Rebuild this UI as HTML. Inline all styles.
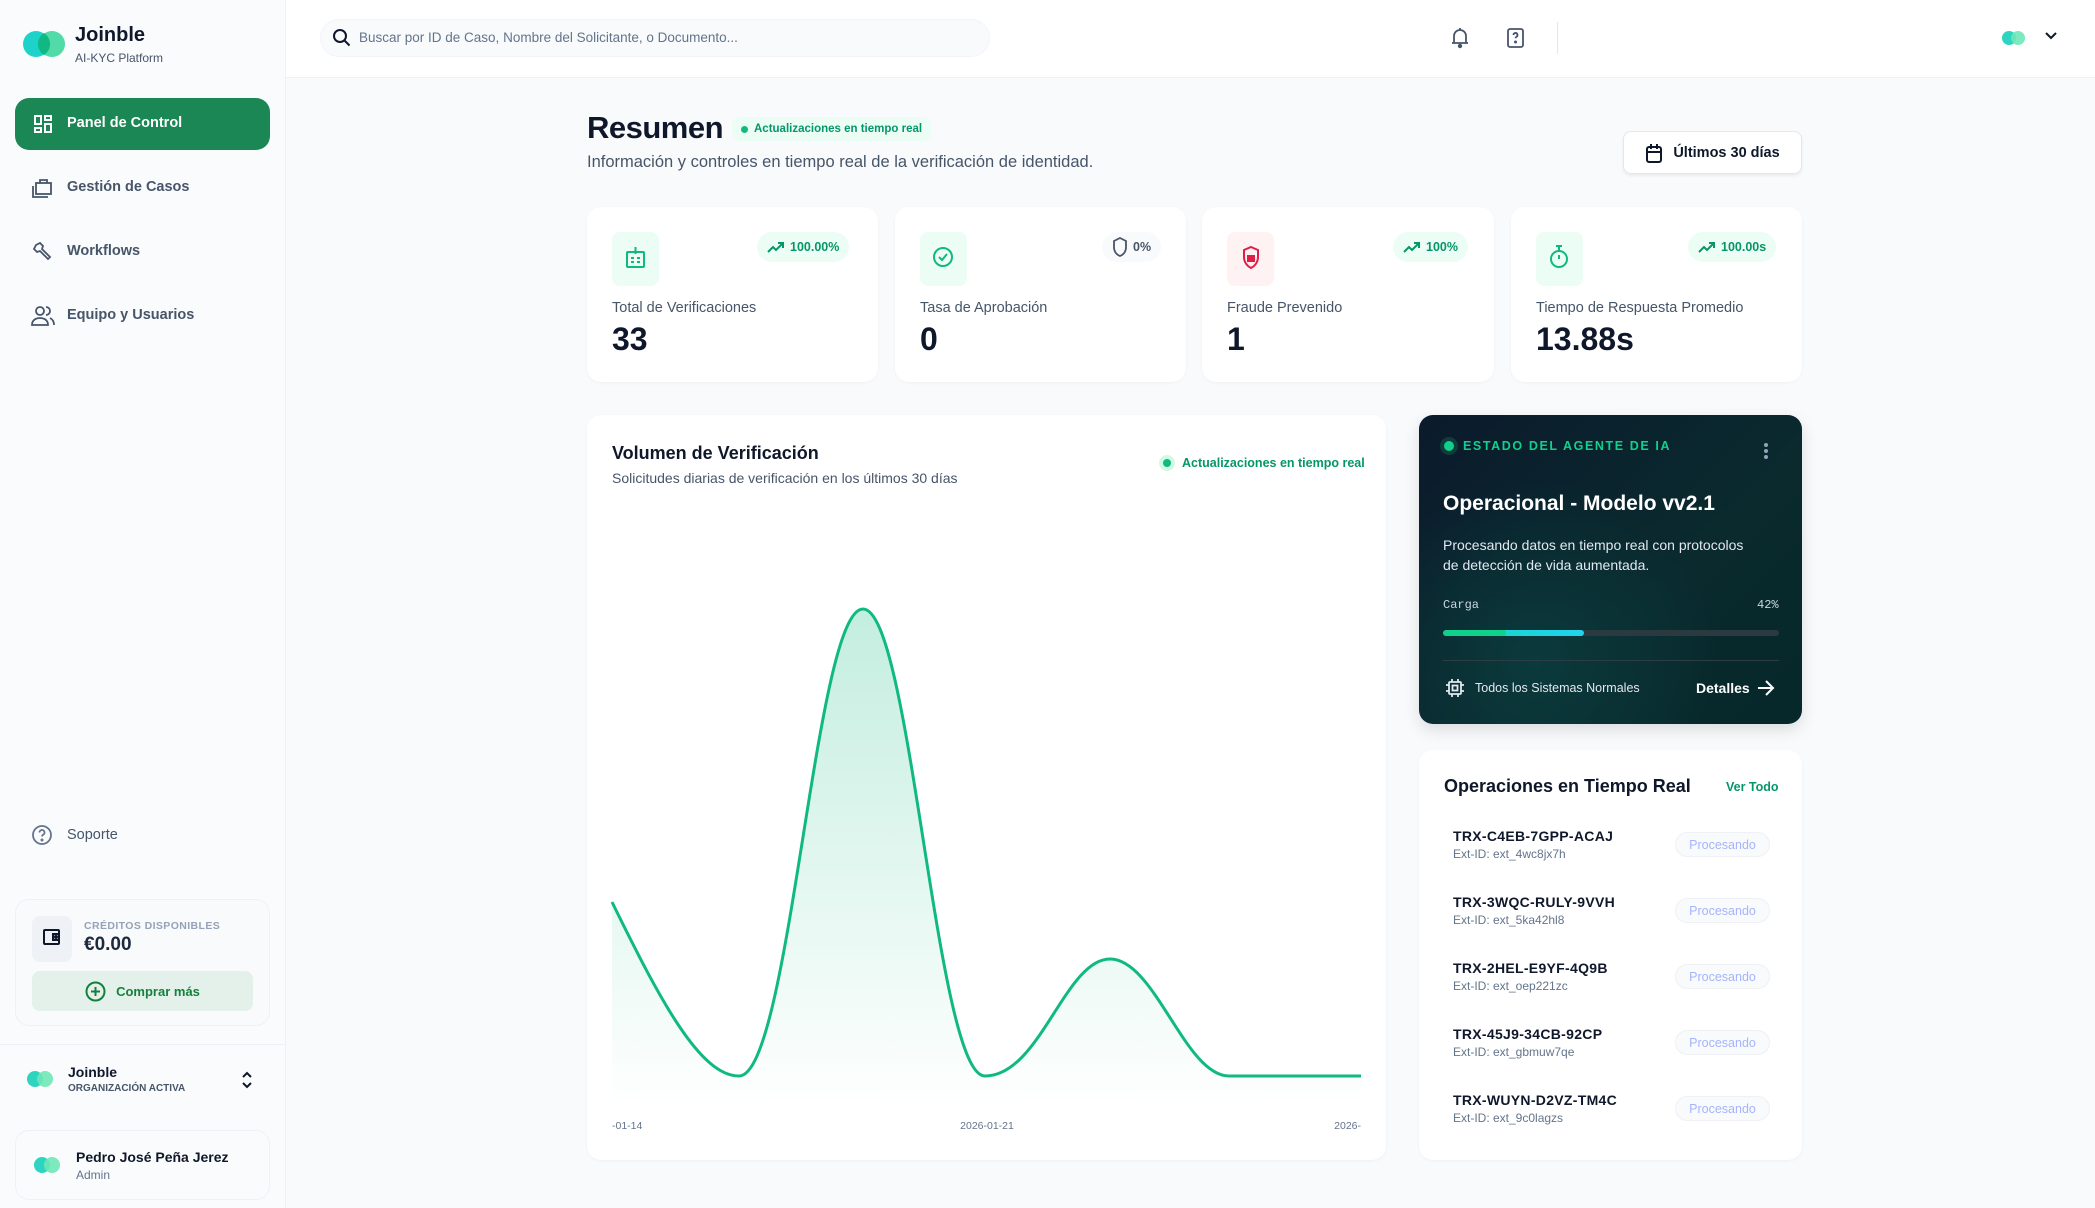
<!DOCTYPE html>
<html><head><meta charset="utf-8"><style>
*{box-sizing:border-box;margin:0;padding:0}
body{width:2095px;height:1208px;background:#f8fafc;font-family:"Liberation Sans",sans-serif;position:relative;overflow:hidden;color:#0f172a}
.a{position:absolute}
.side{left:0;top:0;width:286px;height:1208px;background:#fafbfd;border-right:1px solid #eef1f5}
.hdr{left:286px;top:0;width:1809px;height:78px;background:#fff;border-bottom:1px solid #eef1f5}
.card{background:#fff;border-radius:14px;box-shadow:0 1px 3px rgba(15,23,42,.04)}
.nav{left:67px;font-size:14.5px;font-weight:bold;color:#475569}
.lbl{font-size:14.5px;color:#475569}
.val{font-size:32px;font-weight:bold;color:#0f172a}
.ibox{width:47px;height:54px;border-radius:8px;background:#ecfdf5}
.pill{height:30px;border-radius:15px;background:#ecfdf5;color:#059669;font-size:12.5px;font-weight:bold;display:flex;align-items:center;gap:5px;padding:0 10px}
.row .id{font-size:14px;font-weight:bold;color:#0f172a;letter-spacing:.3px}
.row .ex{font-size:12px;color:#64748b;margin-top:3px}
.badge{width:95px;height:25px;border-radius:13px;background:#f8fafc;border:1px solid #eef1f5;color:#a5b4fc;font-size:12.5px;display:flex;align-items:center;justify-content:center}
</style></head><body>
<div class="a side"></div>
<div class="a hdr"></div>

<!-- logo -->
<svg class="a" style="left:22px;top:28px" width="44" height="32"><circle cx="14" cy="16" r="13" fill="#1dd3c9"/><circle cx="30" cy="16" r="13" fill="#34d399" opacity=".85"/><path d="M22 5a13 13 0 0 1 0 22a13 13 0 0 1 0-22z" fill="#10b981"/></svg>
<div class="a" style="left:75px;top:24px;font-size:20px;font-weight:bold">Joinble</div>
<div class="a" style="left:75px;top:51px;font-size:12px;color:#475569">AI-KYC Platform</div>

<div class="a" style="left:15px;top:98px;width:255px;height:52px;border-radius:14px;background:#1a8754"></div>
<svg class="a" style="left:33px;top:114px" width="20" height="20" fill="none" stroke="#fff" stroke-width="2"><rect x="2" y="2" width="6" height="8"/><rect x="12" y="2" width="6" height="4"/><rect x="2" y="14" width="6" height="4"/><rect x="12" y="10" width="6" height="8"/></svg>
<div class="a" style="left:67px;top:115px;font-size:14.5px;font-weight:bold;color:#fff">Panel de Control</div>

<svg class="a" style="left:32px;top:177px" width="22" height="22" fill="none" stroke="#475569" stroke-width="1.8"><rect x="4" y="6" width="15" height="11"/><path d="M8 6V3h7v3M1 9v11h15"/></svg>
<div class="a nav" style="top:179px">Gestión de Casos</div>
<svg class="a" style="left:32px;top:241px" width="22" height="22" fill="none" stroke="#475569" stroke-width="1.8"><path d="M4 4l4-2 3 3-1 3 8 8-2 2-8-8-3 1-3-3z"/></svg>
<div class="a nav" style="top:243px">Workflows</div>
<svg class="a" style="left:31px;top:305px" width="24" height="22" fill="none" stroke="#475569" stroke-width="1.8"><circle cx="9" cy="6" r="4"/><path d="M1 20c0-5 4-7 8-7s8 2 8 7zM15 2a4 4 0 0 1 0 8M19 13c2 1 4 3 4 7"/></svg>
<div class="a nav" style="top:307px">Equipo y Usuarios</div>

<svg class="a" style="left:31px;top:824px" width="22" height="22" fill="none" stroke="#64748b" stroke-width="1.8"><circle cx="11" cy="11" r="9"/><path d="M8.5 8.5a2.5 2.5 0 1 1 3.5 2.3c-.7.4-1 1-1 1.7"/><circle cx="11" cy="16" r=".6" fill="#64748b"/></svg>
<div class="a" style="left:67px;top:827px;font-size:14.5px;color:#475569">Soporte</div>

<div class="a" style="left:15px;top:899px;width:255px;height:127px;border-radius:14px;background:#f8fafc;border:1px solid #eef1f5"></div>
<div class="a" style="left:32px;top:916px;width:40px;height:46px;border-radius:8px;background:#eef1f5"></div>
<svg class="a" style="left:42px;top:928px" width="20" height="20" fill="none" stroke="#0f172a" stroke-width="2"><rect x="2" y="2" width="15" height="14" rx="1"/><path d="M17 6h-6v6h6"/><circle cx="14" cy="9" r="1"/></svg>
<div class="a" style="left:84px;top:920px;font-size:10.5px;font-weight:bold;color:#94a3b8;letter-spacing:.4px">CRÉDITOS DISPONIBLES</div>
<div class="a" style="left:84px;top:934px;font-size:19px;font-weight:bold;color:#1e293b">€0.00</div>
<div class="a" style="left:32px;top:971px;width:221px;height:40px;border-radius:8px;background:#e4f1ea;display:flex;align-items:center;justify-content:center;gap:10px;color:#15803d;font-size:13px;font-weight:bold"><svg width="21" height="21" fill="none" stroke="#15803d" stroke-width="2"><circle cx="10.5" cy="10.5" r="9"/><path d="M10.5 6v9M6 10.5h9"/></svg>Comprar más</div>

<div class="a" style="left:0;top:1044px;width:286px;height:1px;background:#eef1f5"></div>
<svg class="a" style="left:26px;top:1070px" width="28" height="18"><circle cx="9" cy="9" r="8" fill="#2dd4bf"/><circle cx="19" cy="9" r="8" fill="#6ee7b7" opacity=".9"/></svg>
<div class="a" style="left:68px;top:1064px;font-size:14px;font-weight:bold">Joinble</div>
<div class="a" style="left:68px;top:1083px;font-size:10px;font-weight:bold;color:#475569">ORGANIZACIÓN ACTIVA</div>
<svg class="a" style="left:240px;top:1070px" width="14" height="20" fill="none" stroke="#0f172a" stroke-width="2"><path d="M3 7l4-4 4 4M3 13l4 4 4-4"/></svg>

<div class="a" style="left:15px;top:1130px;width:255px;height:70px;border-radius:14px;background:#fafbfd;border:1px solid #eef1f5"></div>
<svg class="a" style="left:33px;top:1156px" width="28" height="18"><circle cx="9" cy="9" r="8" fill="#2dd4bf"/><circle cx="19" cy="9" r="8" fill="#6ee7b7" opacity=".9"/></svg>
<div class="a" style="left:76px;top:1149px;font-size:14px;font-weight:bold">Pedro José Peña Jerez</div>
<div class="a" style="left:76px;top:1168px;font-size:12px;color:#64748b">Admin</div>

<!-- header -->
<div class="a" style="left:320px;top:19px;width:670px;height:38px;border-radius:19px;background:#f8fafc;border:1px solid #f1f5f9"></div>
<svg class="a" style="left:332px;top:28px" width="20" height="20" fill="none" stroke="#0f172a" stroke-width="2"><circle cx="8" cy="8" r="6"/><path d="M12.5 12.5l5 5"/></svg>
<div class="a" style="left:359px;top:30px;font-size:13.5px;color:#64748b">Buscar por ID de Caso, Nombre del Solicitante, o Documento...</div>
<svg class="a" style="left:1450px;top:27px" width="20" height="22" fill="none" stroke="#475569" stroke-width="1.8"><path d="M4 16V9a6 6 0 0 1 12 0v7M2 16h16M10 3V1"/><circle cx="10" cy="19" r="1.3" fill="#475569"/></svg>
<svg class="a" style="left:1506px;top:27px" width="20" height="22" fill="none" stroke="#475569" stroke-width="1.8"><rect x="2" y="2" width="15" height="18" rx="2"/><path d="M7.5 8a2 2 0 1 1 3 1.7c-.6.4-1 .8-1 1.6"/><circle cx="9.5" cy="15" r=".6" fill="#475569"/></svg>
<div class="a" style="left:1557px;top:22px;width:1px;height:32px;background:#e5e7eb"></div>
<svg class="a" style="left:2001px;top:29px" width="26" height="18"><circle cx="8" cy="9" r="7" fill="#2dd4bf"/><circle cx="17" cy="9" r="7" fill="#6ee7b7" opacity=".9"/></svg>
<svg class="a" style="left:2044px;top:31px" width="14" height="10" fill="none" stroke="#0f172a" stroke-width="2"><path d="M2 2l5 5 5-5"/></svg>

<!-- title -->
<div class="a" style="left:587px;top:110px;font-size:31px;font-weight:bold;letter-spacing:-.5px">Resumen</div>
<div class="a" style="left:732px;top:117px;height:24px;padding:0 9px;border-radius:8px;background:#ecfdf5;color:#059669;font-size:11.5px;font-weight:bold;display:flex;align-items:center;gap:6px"><span style="width:7px;height:7px;border-radius:50%;background:#10b981"></span>Actualizaciones en tiempo real</div>
<div class="a" style="left:587px;top:153px;font-size:16.5px;color:#475569">Información y controles en tiempo real de la verificación de identidad.</div>
<div class="a" style="left:1623px;top:131px;width:179px;height:43px;border-radius:8px;background:#fff;border:1px solid #e2e8f0;box-shadow:0 2px 3px rgba(0,0,0,.06);display:flex;align-items:center;justify-content:center;gap:10px;font-size:14.5px;font-weight:bold"><svg width="18" height="20" fill="none" stroke="#0f172a" stroke-width="2"><rect x="2" y="4" width="14" height="15" rx="2"/><path d="M2 9h14M6 1v5M12 1v5"/></svg>Últimos 30 días</div>

<!-- stat cards -->
<div class="a card" style="left:587px;top:207px;width:291px;height:175px"></div>
<div class="a card" style="left:895px;top:207px;width:291px;height:175px"></div>
<div class="a card" style="left:1202px;top:207px;width:292px;height:175px"></div>
<div class="a card" style="left:1511px;top:207px;width:291px;height:175px"></div>

<div class="a ibox" style="left:612px;top:232px"></div>
<svg class="a" style="left:625px;top:245px" width="22" height="26" fill="none" stroke="#10b981" stroke-width="2"><rect x="2" y="7" width="17" height="15" rx="1"/><path d="M10.5 2v7M6 13h3M6 17h3M12 13h3M12 17h3"/></svg>
<div class="a pill" style="left:757px;top:232px"><svg width="18" height="12" fill="none" stroke="#059669" stroke-width="2"><path d="M1 11l5-5 3 3 7-7M11 2h5v5"/></svg>100.00%</div>
<div class="a lbl" style="left:612px;top:300px">Total de Verificaciones</div>
<div class="a val" style="left:612px;top:321px">33</div>

<div class="a ibox" style="left:920px;top:232px"></div>
<svg class="a" style="left:932px;top:245px" width="22" height="24" fill="none" stroke="#10b981" stroke-width="2"><circle cx="11" cy="12" r="9"/><path d="M7 12l3 3 5-6"/></svg>
<div class="a pill" style="left:1102px;top:232px;background:#f8fafc;color:#475569"><svg width="16" height="20" fill="none" stroke="#475569" stroke-width="1.8"><path d="M8 1l6 3v6c0 5-3 8-6 9-3-1-6-4-6-9V4z"/></svg>0%</div>
<div class="a lbl" style="left:920px;top:300px">Tasa de Aprobación</div>
<div class="a val" style="left:920px;top:321px">0</div>

<div class="a ibox" style="left:1227px;top:232px;background:#fef2f2"></div>
<svg class="a" style="left:1240px;top:245px" width="22" height="26" fill="none" stroke="#e11d48" stroke-width="2"><path d="M11 2l7 3v7c0 5-3 9-7 11-4-2-7-6-7-11V5z"/><rect x="8" y="11" width="6" height="5" fill="#e11d48"/></svg>
<div class="a pill" style="left:1393px;top:232px"><svg width="18" height="12" fill="none" stroke="#059669" stroke-width="2"><path d="M1 11l5-5 3 3 7-7M11 2h5v5"/></svg>100%</div>
<div class="a lbl" style="left:1227px;top:300px">Fraude Prevenido</div>
<div class="a val" style="left:1227px;top:321px">1</div>

<div class="a ibox" style="left:1536px;top:232px"></div>
<svg class="a" style="left:1548px;top:243px" width="22" height="28" fill="none" stroke="#10b981" stroke-width="2"><circle cx="11" cy="16" r="8"/><path d="M8 3h6M11 3v5M11 12v4"/></svg>
<div class="a pill" style="left:1688px;top:232px"><svg width="18" height="12" fill="none" stroke="#059669" stroke-width="2"><path d="M1 11l5-5 3 3 7-7M11 2h5v5"/></svg>100.00s</div>
<div class="a lbl" style="left:1536px;top:300px">Tiempo de Respuesta Promedio</div>
<div class="a val" style="left:1536px;top:321px">13.88s</div>

<!-- chart -->
<div class="a card" style="left:587px;top:415px;width:799px;height:745px"></div>
<div class="a" style="left:612px;top:443px;font-size:18px;font-weight:bold">Volumen de Verificación</div>
<div class="a" style="left:612px;top:470px;font-size:14px;color:#475569">Solicitudes diarias de verificación en los últimos 30 días</div>
<div class="a" style="left:1159px;top:455px;width:16px;height:16px;border-radius:50%;background:#d1fae5"></div>
<div class="a" style="left:1163px;top:459px;width:8px;height:8px;border-radius:50%;background:#10b981"></div>
<div class="a" style="left:1182px;top:456px;font-size:12.5px;font-weight:bold;color:#059669">Actualizaciones en tiempo real</div>
<svg class="a" style="left:0;top:0" width="2095" height="1208">
<defs><linearGradient id="g" x1="0" y1="0" x2="0" y2="1"><stop offset="0" stop-color="#10b981" stop-opacity=".25"/><stop offset="1" stop-color="#10b981" stop-opacity="0"/></linearGradient></defs>
<path d="M612,902 C660,1000 700,1076 739,1076 C790,1076 815,609 863,609 C911,609 936,1076 985,1076 C1040,1076 1065,959 1110,959 C1155,959 1185,1076 1229,1076 L1361,1076 L1361,1110 L612,1110 Z" fill="url(#g)"/>
<path d="M612,902 C660,1000 700,1076 739,1076 C790,1076 815,609 863,609 C911,609 936,1076 985,1076 C1040,1076 1065,959 1110,959 C1155,959 1185,1076 1229,1076 L1361,1076" fill="none" stroke="#10b981" stroke-width="3"/>
<text x="612" y="1129" font-size="10.5" fill="#64748b" font-family="Liberation Sans">-01-14</text>
<text x="987" y="1129" font-size="10.5" fill="#64748b" text-anchor="middle" font-family="Liberation Sans">2026-01-21</text>
<text x="1361" y="1129" font-size="10.5" fill="#64748b" text-anchor="end" font-family="Liberation Sans">2026-</text>
</svg>

<!-- AI card -->
<div class="a" style="left:1419px;top:415px;width:383px;height:309px;border-radius:14px;background:radial-gradient(circle at 30% 80%,#0b3a3c 0%,rgba(11,58,60,0) 50%),linear-gradient(135deg,#0b1a2c 0%,#0a2a2e 60%,#06282a 100%);box-shadow:0 6px 16px rgba(0,0,0,.12)"></div>
<div class="a" style="left:1440px;top:437px;width:18px;height:18px;border-radius:50%;background:#0f3b3b"></div>
<div class="a" style="left:1444px;top:441px;width:10px;height:10px;border-radius:50%;background:#10d08c"></div>
<div class="a" style="left:1463px;top:439px;font-size:12.5px;font-weight:bold;color:#10d08c;letter-spacing:1.6px">ESTADO DEL AGENTE DE IA</div>
<svg class="a" style="left:1763px;top:442px" width="6" height="18" fill="#94a3b8"><circle cx="3" cy="3" r="2"/><circle cx="3" cy="9" r="2"/><circle cx="3" cy="15" r="2"/></svg>
<div class="a" style="left:1443px;top:492px;font-size:21px;font-weight:bold;color:#fff">Operacional - Modelo vv2.1</div>
<div class="a" style="left:1443px;top:535px;font-size:14px;line-height:20px;color:#e2e8f0">Procesando datos en tiempo real con protocolos<br>de detección de vida aumentada.</div>
<div class="a" style="left:1443px;top:598px;font-size:12px;color:#cbd5e1;font-family:'Liberation Mono',monospace">Carga</div>
<div class="a" style="left:1757px;top:598px;font-size:12px;color:#cbd5e1;font-family:'Liberation Mono',monospace">42%</div>
<div class="a" style="left:1443px;top:630px;width:336px;height:6px;border-radius:3px;background:#2a3a40"></div>
<div class="a" style="left:1443px;top:630px;width:141px;height:6px;border-radius:3px;background:linear-gradient(90deg,#10d08c 0%,#10d08c 44%,#1dd3d3 45%,#22d3ee 100%)"></div>
<div class="a" style="left:1443px;top:660px;width:336px;height:1px;background:#2c3e44"></div>
<svg class="a" style="left:1445px;top:678px" width="20" height="20" fill="none" stroke="#e2e8f0" stroke-width="1.8"><rect x="4" y="4" width="12" height="12" rx="1"/><rect x="7.5" y="7.5" width="5" height="5"/><path d="M7 1v3M13 1v3M7 16v3M13 16v3M1 7h3M1 13h3M16 7h3M16 13h3"/></svg>
<div class="a" style="left:1475px;top:681px;font-size:12.5px;color:#e2e8f0">Todos los Sistemas Normales</div>
<div class="a" style="left:1696px;top:680px;font-size:14px;font-weight:bold;color:#fff">Detalles</div>
<svg class="a" style="left:1757px;top:679px" width="18" height="18" fill="none" stroke="#fff" stroke-width="2"><path d="M1 9h15M9 2l7 7-7 7"/></svg>

<!-- ops -->
<div class="a card" style="left:1419px;top:750px;width:383px;height:410px"></div>
<div class="a" style="left:1444px;top:776px;font-size:18px;font-weight:bold">Operaciones en Tiempo Real</div>
<div class="a" style="left:1726px;top:780px;font-size:12.5px;font-weight:bold;color:#059669">Ver Todo</div>

<div class="a row" style="left:1453px;top:828px"><div class="id">TRX-C4EB-7GPP-ACAJ</div><div class="ex">Ext-ID: ext_4wc8jx7h</div></div>
<div class="a badge" style="left:1675px;top:832px">Procesando</div>
<div class="a row" style="left:1453px;top:894px"><div class="id">TRX-3WQC-RULY-9VVH</div><div class="ex">Ext-ID: ext_5ka42hl8</div></div>
<div class="a badge" style="left:1675px;top:898px">Procesando</div>
<div class="a row" style="left:1453px;top:960px"><div class="id">TRX-2HEL-E9YF-4Q9B</div><div class="ex">Ext-ID: ext_oep221zc</div></div>
<div class="a badge" style="left:1675px;top:964px">Procesando</div>
<div class="a row" style="left:1453px;top:1026px"><div class="id">TRX-45J9-34CB-92CP</div><div class="ex">Ext-ID: ext_gbmuw7qe</div></div>
<div class="a badge" style="left:1675px;top:1030px">Procesando</div>
<div class="a row" style="left:1453px;top:1092px"><div class="id">TRX-WUYN-D2VZ-TM4C</div><div class="ex">Ext-ID: ext_9c0lagzs</div></div>
<div class="a badge" style="left:1675px;top:1096px">Procesando</div>
</body></html>
